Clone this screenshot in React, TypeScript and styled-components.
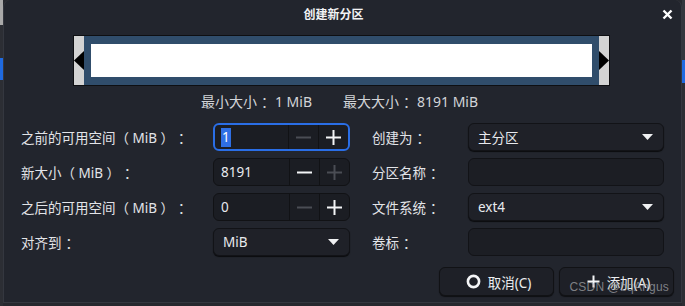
import styled, { createGlobalStyle, css } from "styled-components";

const GlobalStyle = createGlobalStyle`
  html, body {
    margin: 0;
    padding: 0;
    background: #2a2c32;
  }
  body {
    font-family: "Noto Sans", "Noto Sans CJK SC", sans-serif;
    font-size: 13px;
    color: #e4e6ea;
    text-spacing-trim: space-all;
  }
`;

const Desktop = styled.div`
  display: flex;
  width: 685px;
  height: 306px;
  overflow: hidden;
  background: #26282e;
`;

const Strip = styled.div<{ $side: "left" | "right" }>`
  width: 3px;
  flex: none;
  background: ${(p) =>
    p.$side === "left"
      ? "linear-gradient(#a9a9a9 0 25px, #2c2e34 25px 58px, #1f6ae0 58px 80px, #2c2e34 80px)"
      : "linear-gradient(#33363d 0 60px, #1f6ae0 60px 83px, #2c2e34 83px)"};
`;

const Dialog = styled.div`
  flex: 1;
  height: 303px;
  box-sizing: border-box;
  display: flex;
  flex-direction: column;
  background: #22252d;
  border: 1px solid #34373f;
  border-top: none;
  border-radius: 7px 7px 0 0;
`;

const TitleBar = styled.div`
  position: relative;
  height: 28px;
  display: flex;
  align-items: center;
  justify-content: center;
  flex: none;
`;

const Title = styled.span`
  font-size: 12px;
  font-weight: 700;
  color: #f2f3f5;
  padding-right: 18px;
`;

const CloseButton = styled.button`
  position: absolute;
  right: 7px;
  top: 7px;
  width: 14px;
  height: 14px;
  padding: 0;
  border: none;
  background: none;
  display: flex;
  align-items: center;
  justify-content: center;
`;

const BarFrame = styled.div`
  margin: 7px 0 0 69px;
  width: 537px;
  height: 51px;
  box-sizing: border-box;
  border: 1px solid #0e0f12;
  display: flex;
  flex: none;
`;

const Handle = styled.div<{ $side: "left" | "right" }>`
  width: 10px;
  background: #d3d3d3;
  display: flex;
  align-items: center;
  justify-content: ${(p) => (p.$side === "left" ? "flex-start" : "flex-end")};
`;

const Partition = styled.div`
  flex: 1;
  background: #304d6b;
  padding: 8px 7px;
  display: flex;
`;

const Used = styled.div`
  flex: 1;
  background: #ffffff;
`;

const SizeInfo = styled.div`
  display: flex;
  justify-content: center;
  gap: 31px;
  margin-top: 6px;
  padding-right: 6px;
  height: 18px;
  align-items: center;
  color: #d2d4d8;
  font-size: 14px;
  flex: none;
`;

const Colon = styled.span`
  margin-left: 4px;
`;

const Form = styled.div`
  display: grid;
  grid-template-columns: 192px 137px 118px 196px;
  row-gap: 7px;
  grid-auto-rows: 28px;
  margin: 13px 0 0 17px;
  flex: none;
`;

const Label = styled.div<{ $right?: boolean }>`
  display: flex;
  align-items: center;
  color: #e2e4e8;
  font-size: 13.5px;
  padding-left: ${(p) => (p.$right ? "22px" : "0")};
  white-space: pre;
`;

const fieldBase = css`
  box-sizing: border-box;
  border-radius: 6px;
  height: 28px;
  display: flex;
  align-items: center;
`;

const Spin = styled.div<{ $focused?: boolean }>`
  ${fieldBase};
  background: #1b1d23;
  border: ${(p) => (p.$focused ? "2px solid #2a6ee6" : "1px solid #111215")};
  overflow: hidden;
`;

const SpinValue = styled.div<{ $focused?: boolean }>`
  flex: 1;
  padding-left: ${(p) => (p.$focused ? "6px" : "7px")};
  font-size: 13.5px;
  color: #e8eaee;
  display: flex;
  align-items: center;
`;

const Selected = styled.span`
  background: #2f6fe4;
  color: #ffffff;
  line-height: 19px;
  padding: 0 1px;
`;

const SpinButton = styled.div<{ $disabled?: boolean }>`
  width: 29px;
  height: 100%;
  border-left: 1px solid #111215;
  display: flex;
  align-items: center;
  justify-content: center;
  color: ${(p) => (p.$disabled ? "#4a4d54" : "#f4f5f7")};
`;

const Combo = styled.div`
  ${fieldBase};
  background: #1f2128;
  border: 1px solid #121317;
  box-shadow: 0 1px 1px rgba(0, 0, 0, 0.7);
  padding: 0 10px 0 9px;
  justify-content: space-between;
  font-size: 13.5px;
  color: #e8eaee;
`;

const TextField = styled.div`
  ${fieldBase};
  background: #1c1e24;
  border: 1px solid #121317;
`;

const Buttons = styled.div`
  display: flex;
  justify-content: flex-end;
  gap: 5px;
  margin: 11px 7px 0 0;
  position: relative;
`;

const DialogButton = styled.button`
  width: 115px;
  height: 29px;
  box-sizing: border-box;
  border-radius: 6px;
  border: 1px solid #111215;
  background: #1e2027;
  box-shadow: 0 1px 1px rgba(0, 0, 0, 0.6);
  color: #eceef1;
  font-family: "Noto Sans", "Noto Sans CJK SC", sans-serif;
  font-size: 13.5px;
  display: flex;
  align-items: center;
  justify-content: center;
  gap: 7px;
  padding: 0 0 0 4px;
`;

const Watermark = styled.span`
  position: absolute;
  right: 5px;
  top: 13px;
  font-family: "Liberation Sans", "Noto Sans CJK SC", sans-serif;
  font-size: 12px;
  color: rgba(170, 172, 176, 0.7);
  pointer-events: none;
  letter-spacing: 0.2px;
`;

const Minus = () => (
  <svg width="15" height="15" viewBox="0 0 15 15">
    <rect x="0" y="6.5" width="15" height="2" fill="currentColor" />
  </svg>
);

const Plus = () => (
  <svg width="15" height="15" viewBox="0 0 15 15">
    <rect x="0" y="6.5" width="15" height="2" fill="currentColor" />
    <rect x="6.5" y="0" width="2" height="15" fill="currentColor" />
  </svg>
);

const Caret = () => (
  <svg width="11" height="6" viewBox="0 0 11 6">
    <path d="M0 0 H11 L5.5 6 Z" fill="#f0f1f3" />
  </svg>
);

const Arrow = ({ dir }: { dir: "left" | "right" }) => (
  <svg width="11" height="22" viewBox="0 0 11 22">
    <path d={dir === "left" ? "M11 0 L0 10.5 L11 21 Z" : "M0 0 L11 10.5 L0 21 Z"} fill="#000" />
  </svg>
);

type SpinProps = {
  value: string;
  focused?: boolean;
  minusOff?: boolean;
  plusOff?: boolean;
};

const SpinBox = ({ value, focused, minusOff, plusOff }: SpinProps) => (
  <Spin $focused={focused}>
    <SpinValue $focused={focused}>{focused ? <Selected>{value}</Selected> : value}</SpinValue>
    <SpinButton $disabled={minusOff}>
      <Minus />
    </SpinButton>
    <SpinButton $disabled={plusOff}>
      <Plus />
    </SpinButton>
  </Spin>
);

const FieldLabel = ({ text, right }: { text: string; right?: boolean }) => (
  <Label $right={right}>
    {text}
    <Colon>：</Colon>
  </Label>
);

export default function App() {
  return (
    <>
      <GlobalStyle />
      <Desktop>
        <Strip $side="left" />
        <Dialog>
          <TitleBar>
            <Title>创建新分区</Title>
            <CloseButton>
              <svg width="11" height="11" viewBox="0 0 11 11">
                <path d="M1.5 1.5 L9.5 9.5 M9.5 1.5 L1.5 9.5" stroke="#fff" strokeWidth="2.4" />
              </svg>
            </CloseButton>
          </TitleBar>

          <BarFrame>
            <Handle $side="left">
              <Arrow dir="left" />
            </Handle>
            <Partition>
              <Used />
            </Partition>
            <Handle $side="right">
              <Arrow dir="right" />
            </Handle>
          </BarFrame>

          <SizeInfo>
            <span>
              最小大小<Colon>：</Colon>1 MiB
            </span>
            <span>
              最大大小<Colon>：</Colon>8191 MiB
            </span>
          </SizeInfo>

          <Form>
            <FieldLabel text="之前的可用空间（ MiB ）" />
            <SpinBox value="1" focused minusOff />
            <FieldLabel text="创建为" right />
            <Combo>
              <span>主分区</span>
              <Caret />
            </Combo>

            <FieldLabel text="新大小（ MiB ）" />
            <SpinBox value="8191" plusOff />
            <FieldLabel text="分区名称" right />
            <TextField />

            <FieldLabel text="之后的可用空间（ MiB ）" />
            <SpinBox value="0" minusOff />
            <FieldLabel text="文件系统" right />
            <Combo>
              <span>ext4</span>
              <Caret />
            </Combo>

            <FieldLabel text="对齐到" />
            <Combo>
              <span>MiB</span>
              <Caret />
            </Combo>
            <FieldLabel text="卷标" right />
            <TextField />
          </Form>

          <Buttons>
            <DialogButton>
              <svg width="15" height="15" viewBox="0 0 15 15">
                <circle cx="7.5" cy="7.5" r="5.6" fill="none" stroke="#f4f5f7" strokeWidth="2.6" />
              </svg>
              取消(C)
            </DialogButton>
            <DialogButton>
              <svg width="13" height="13" viewBox="0 0 13 13">
                <rect x="0.5" y="5.5" width="12" height="2" fill="#f4f5f7" />
                <rect x="5.5" y="0.5" width="2" height="12" fill="#f4f5f7" />
              </svg>
              添加(A)
            </DialogButton>
            <Watermark>CSDN @bqAngus</Watermark>
          </Buttons>
        </Dialog>
        <Strip $side="right" />
      </Desktop>
    </>
  );
}
